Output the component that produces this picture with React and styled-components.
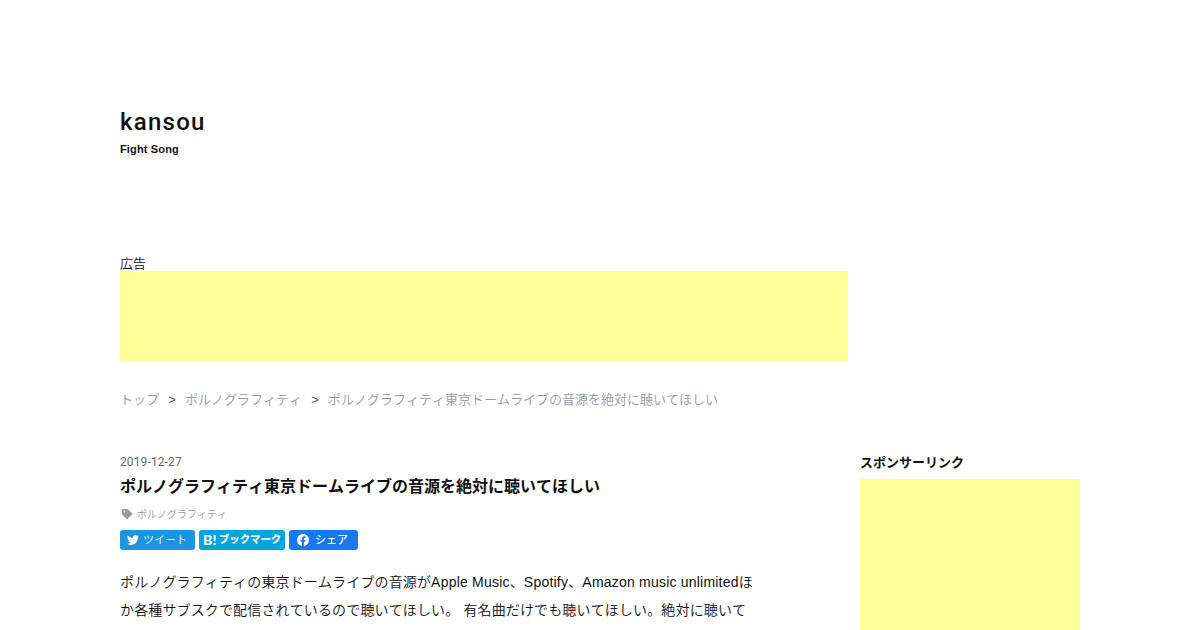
import styled, { createGlobalStyle } from "styled-components";

const GlobalStyle = createGlobalStyle`
  body {
    margin: 0;
    background: #fff;
    color: #111;
    font-family: "Liberation Sans", "Noto Sans CJK JP", sans-serif;
    font-weight: 350;
    font-kerning: none;
    overflow: hidden;
  }
`;

const Frame = styled.div`
  width: 960px;
  height: 630px;
  margin: 0 auto;
  box-sizing: border-box;
  padding-top: 104px;
  overflow: hidden;
`;

const Header = styled.header`
  height: 151px;
`;

const BlogTitle = styled.h1`
  margin: 0;
  font: 500 24px/36px Roboto, sans-serif;
  letter-spacing: 1.25px;
`;

const Description = styled.h2`
  margin: 0;
  font-size: 11px;
  line-height: 18px;
  letter-spacing: 0.15px;
`;

const AdLabel = styled.div`
  height: 16px;
  font-size: 13px;
  line-height: 18px;
`;

const AdBox = styled.div`
  width: ${({ $width }) => $width}px;
  height: ${({ $height }) => $height}px;
  background: #ffff99;
`;

const Breadcrumb = styled.nav`
  display: flex;
  gap: 9.2px;
  margin-top: 29px;
  height: 64px;
  font-size: 13px;
  line-height: 20px;
  color: #555;
  white-space: nowrap;
`;

const Crumb = styled.a`
  color: #999;
`;

const Content = styled.div`
  display: flex;
  justify-content: space-between;
`;

const Main = styled.main`
  width: 640px;
`;

const Sidebar = styled.aside`
  width: 220px;
`;

const SideTitle = styled.div`
  height: 25px;
  font-size: 13px;
  font-weight: bold;
  line-height: 18px;
`;

const EntryDate = styled.div`
  font: 12px/16px Roboto, sans-serif;
  letter-spacing: 0.12px;
  color: #666;
`;

const EntryTitle = styled.h2`
  margin: 5px 0 0;
  font-size: 16px;
  line-height: 24px;
`;

const Category = styled.div`
  display: flex;
  align-items: center;
  gap: 4px;
  height: 16px;
  margin: 6px 0 9px;
  padding-left: 1px;
  font-size: 10px;
  color: #999;

  svg {
    margin-top: 2px;
  }
`;

const ShareRow = styled.div`
  display: flex;
  gap: 4px;
`;

const ShareButton = styled.a`
  display: flex;
  align-items: center;
  box-sizing: border-box;
  width: ${({ $width }) => $width}px;
  height: 20px;
  padding-left: ${({ $pad }) => $pad}px;
  gap: ${({ $gap }) => $gap}px;
  border-radius: 3px;
  background: ${({ $color }) => $color};
  color: #fff;
  font-size: ${({ $size }) => $size || 11}px;
  font-weight: ${({ $weight }) => $weight || 350};
  line-height: 20px;
  white-space: nowrap;
`;

const HatenaMark = styled.span`
  font: 900 14px/20px Lato, "Liberation Sans", sans-serif;
  letter-spacing: 0.3px;
`;

const Body = styled.p`
  margin: 18px 0 0;
  font-size: 14px;
  line-height: 28px;
  letter-spacing: 0.14px;
  white-space: nowrap;
`;

const Latin = styled.span`
  letter-spacing: 0.21px;
`;

const TagIcon = () => (
  <svg width="12" height="12" viewBox="0 0 12 12">
    <path
      fill="#999"
      fillRule="evenodd"
      d="M2 1h4.4q.5 0 .9.4l3.8 3.8q.6.6 0 1.2l-4.4 4.4q-.6.6-1.2 0L1.4 6.7Q1 6.3 1 5.8V2q0-1 1-1zM3.5 2.5a1 1 0 1 0 0 2 1 1 0 0 0 0-2z"
    />
  </svg>
);

const TwitterIcon = () => (
  <svg width="12" height="12" viewBox="0 0 24 24" fill="#fff">
    <path d="M23.95 4.57a10 10 0 0 1-2.82.77 4.96 4.96 0 0 0 2.16-2.72c-.95.55-2 .95-3.13 1.18a4.92 4.92 0 0 0-8.38 4.48C7.69 8.1 4.07 6.13 1.64 3.16a4.92 4.92 0 0 0 1.52 6.57 4.9 4.9 0 0 1-2.23-.61v.06a4.92 4.92 0 0 0 3.95 4.83 5 5 0 0 1-2.21.08 4.94 4.94 0 0 0 4.6 3.42A9.87 9.87 0 0 1 0 19.54a13.99 13.99 0 0 0 7.56 2.21c9.05 0 14-7.5 14-13.98l-.02-.63a10 10 0 0 0 2.46-2.55z" />
  </svg>
);

const FacebookIcon = () => (
  <svg width="12" height="12" viewBox="0 0 24 24" fill="#fff">
    <path d="M24 12.07C24 5.4 18.63 0 12 0S0 5.4 0 12.07C0 18.1 4.39 23.09 10.13 24v-8.44H7.08v-3.49h3.05V9.41c0-3.02 1.79-4.69 4.53-4.69 1.31 0 2.68.24 2.68.24v2.97h-1.51c-1.49 0-1.96.93-1.96 1.89v2.25h3.33l-.53 3.49h-2.8V24C19.61 23.09 24 18.1 24 12.07z" />
  </svg>
);

function App() {
  return (
    <Frame>
      <GlobalStyle />
      <Header>
        <BlogTitle>kansou</BlogTitle>
        <Description>Fight Song</Description>
      </Header>
      <AdLabel>広告</AdLabel>
      <AdBox $width={728} $height={90} />
      <Breadcrumb>
        <Crumb>トップ</Crumb>
        <span>&gt;</span>
        <Crumb>ポルノグラフィティ</Crumb>
        <span>&gt;</span>
        <Crumb>ポルノグラフィティ東京ドームライブの音源を絶対に聴いてほしい</Crumb>
      </Breadcrumb>
      <Content>
        <Main>
          <EntryDate>2019-12-27</EntryDate>
          <EntryTitle>
            ポルノグラフィティ東京ドームライブの音源を絶対に聴いてほしい
          </EntryTitle>
          <Category>
            <TagIcon />
            ポルノグラフィティ
          </Category>
          <ShareRow>
            <ShareButton $width={75} $pad={7} $gap={4} $color="#1b95e0">
              <TwitterIcon />
              ツイート
            </ShareButton>
            <ShareButton
              $width={86}
              $pad={4}
              $gap={2}
              $color="#00a4de"
              $size={10.4}
              $weight={900}
            >
              <HatenaMark>B!</HatenaMark>
              ブックマーク
            </ShareButton>
            <ShareButton
              $width={69}
              $pad={8}
              $gap={6}
              $color="#1877f2"
              $weight={500}
            >
              <FacebookIcon />
              シェア
            </ShareButton>
          </ShareRow>
          <Body>
            ポルノグラフィティの東京ドームライブの音源が
            <Latin>Apple Music、Spotify、Amazon music unlimited</Latin>ほ
            <br />
            か各種サブスクで配信されているので聴いてほしい。 有名曲だけでも聴いてほしい。絶対に聴いて
          </Body>
        </Main>
        <Sidebar>
          <SideTitle>スポンサーリンク</SideTitle>
          <AdBox $width={220} $height={160} />
        </Sidebar>
      </Content>
    </Frame>
  );
}

export default App;
